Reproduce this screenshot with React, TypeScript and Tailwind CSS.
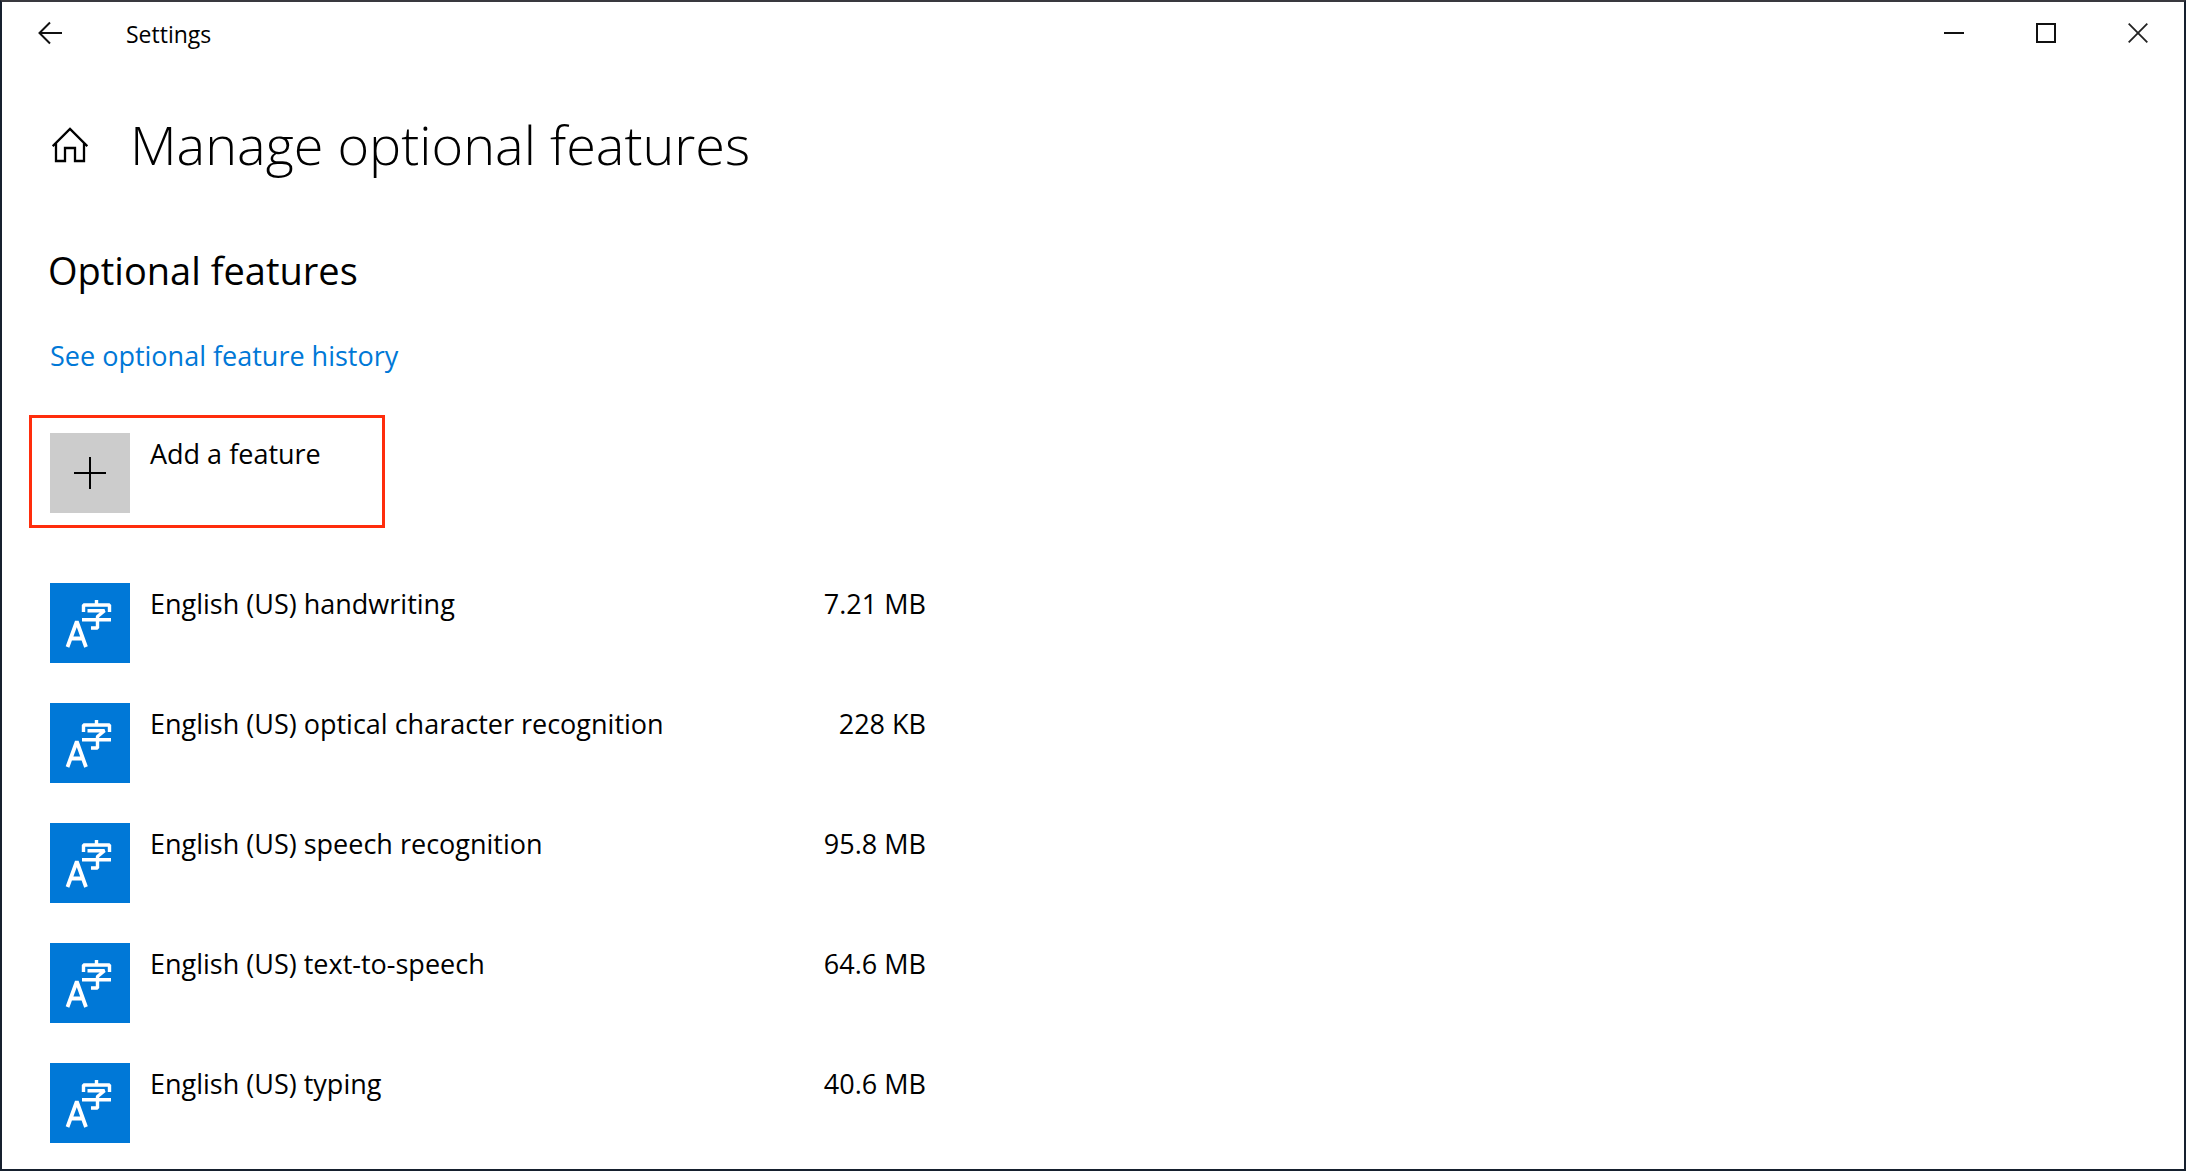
const features = [
  { name: "English (US) handwriting", size: "7.21 MB" },
  { name: "English (US) optical character recognition", size: "228 KB" },
  { name: "English (US) speech recognition", size: "95.8 MB" },
  { name: "English (US) text-to-speech", size: "64.6 MB" },
  { name: "English (US) typing", size: "40.6 MB" },
];

function LanguageIcon() {
  return (
    <svg
      aria-hidden="true"
      viewBox="0 0 80 80"
      className="size-20 shrink-0 bg-[#0078d7]"
      fill="none"
      stroke="#fff"
      strokeWidth="3.8"
      strokeLinejoin="bevel"
    >
      <path d="M17.500 64 26.800 38.500 36 64M20 55.500h13.600" />
      <path strokeWidth="3.4" d="M46.500 17v5M33.500 29v-7h26v7M37.500 27.700h17L47.500 33.500V45H41M32 36.700h29" />
    </svg>
  );
}

function TitleBar() {
  return (
    <header className="flex h-[62px] items-center justify-between">
      <div className="flex items-center">
        <button type="button" aria-label="Back" className="flex h-full w-24 items-center justify-center">
          <svg viewBox="0 0 24 24" className="size-6" fill="none" stroke="#111" strokeWidth="2">
            <path d="M24 12H1M12 1.5 1.5 12 12 22.5" />
          </svg>
        </button>
        <span className="ml-7 pt-0.5 text-[23px] leading-8">Settings</span>
      </div>
      <div className="flex">
        <button type="button" aria-label="Minimize" className="flex h-[62px] w-[92px] items-center justify-center">
          <svg viewBox="0 0 20 20" className="size-5" fill="none" stroke="#111" strokeWidth="2">
            <path d="M0 10h20" />
          </svg>
        </button>
        <button type="button" aria-label="Maximize" className="flex h-[62px] w-[92px] items-center justify-center">
          <svg viewBox="0 0 20 20" className="size-5" fill="none" stroke="#111" strokeWidth="2">
            <path d="M1 1h18v18H1z" />
          </svg>
        </button>
        <button type="button" aria-label="Close" className="flex h-[62px] w-[92px] items-center justify-center">
          <svg viewBox="0 0 20 20" className="size-5" fill="none" stroke="#222" strokeWidth="1.8">
            <path d="M.7.7l18.6 18.6M19.3.7.7 19.3" />
          </svg>
        </button>
      </div>
    </header>
  );
}

export default function App() {
  return (
    <div className="min-h-screen border-2 border-[#16202e] border-t-[#39393f] bg-white font-['Open_Sans','Noto_Sans',sans-serif] text-[27px] leading-9 text-black">
      <TitleBar />
      <main className="px-[46px] pt-[38px]">
        <div className="flex items-center gap-[42px]">
          <a href="#home" aria-label="Home" className="ml-1 pt-0.5">
            <svg viewBox="0 0 36 36" className="size-9" fill="none" stroke="#000" strokeWidth="2.3">
              <path d="M.7 19.300 18 2l17.300 17.300M4 16.500V34h9V21h10v13h9V16.500" />
            </svg>
          </a>
          <h1 className="text-[54px] leading-[84px] font-light">Manage optional features</h1>
        </div>
        <h2 className="mt-14 text-[38px] leading-[56px]">Optional features</h2>
        <a href="#history" className="mt-10 ml-0.5 block w-fit text-[#0078d7]">
          See optional feature history
        </a>
        <button
          type="button"
          className="mt-[41px] -ml-[19px] flex w-[356px] items-start gap-5 border-3 border-[#ff2d0c] px-[18px] pt-[15px] pb-3 text-left"
        >
          <svg aria-hidden="true" viewBox="0 0 80 80" className="size-20 shrink-0 bg-[#ccc]" stroke="#000" strokeWidth="2">
            <path d="M24 40h32M40 24v32" />
          </svg>
          <span className="pt-[3px]">Add a feature</span>
        </button>
        <ul className="mt-[55px] ml-0.5 flex max-w-[876px] flex-col gap-10 pb-6">
          {features.map((feature) => (
            <li key={feature.name} className="flex items-start gap-5">
              <LanguageIcon />
              <span className="flex-1 pt-[3px]">{feature.name}</span>
              <span className="pt-[3px]">{feature.size}</span>
            </li>
          ))}
        </ul>
      </main>
    </div>
  );
}
